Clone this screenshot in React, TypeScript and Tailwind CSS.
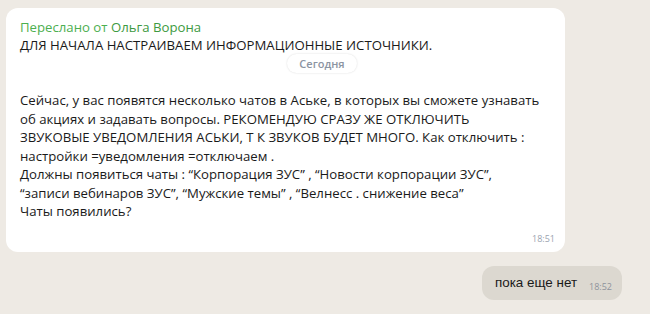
export default function App() {
  return (
    <div className="w-[650px] h-[314px] overflow-hidden bg-[#eeeae4] relative" style={{ fontFamily: '"Open Sans", "Noto Sans", sans-serif' }}>
      {/* floating date */}
      <div className="absolute z-10 left-[287px] top-[54px] h-[19px] w-[70px] rounded-full bg-white shadow-[0_0_2px_rgba(0,0,0,0.15)] text-[11px] font-semibold text-[#8c94a2] leading-[19px] text-center">
        Сегодня
      </div>

      <div className="pl-[6px] pt-[8px] flex flex-col">
        {/* forwarded message */}
        <div className="w-[559px] h-[244px] bg-white rounded-[12px] px-[14px] pt-[10px] relative text-[13.2px] text-[#1a1a1a] leading-[18px]">
          <div className="text-[#4caf50]">
            Переслано от <span className="text-[#3d9a41]">Ольга Ворона</span>
          </div>
          <div>ДЛЯ НАЧАЛА НАСТРАИВАЕМ ИНФОРМАЦИОННЫЕ ИСТОЧНИКИ.</div>
          <div className="mt-[37px] leading-[18.5px]">
            <div>Сейчас, у вас появятся несколько чатов в Аське, в которых вы сможете узнавать</div>
            <div>об акциях и задавать вопросы. РЕКОМЕНДУЮ СРАЗУ ЖЕ ОТКЛЮЧИТЬ</div>
            <div>ЗВУКОВЫЕ УВЕДОМЛЕНИЯ АСЬКИ, Т К ЗВУКОВ БУДЕТ МНОГО. Как отключить :</div>
            <div>настройки =уведомления =отключаем .</div>
            <div>Должны появиться чаты : “Корпорация ЗУС” , “Новости корпорации ЗУС”,</div>
            <div>“записи вебинаров ЗУС”, “Мужские темы” , “Велнесс . снижение веса”</div>
            <div>Чаты появились?</div>
          </div>
          <div className="absolute right-[10px] bottom-[4px] text-[9px] text-[#9aa3b0]">18:51</div>
        </div>

        {/* my reply */}
        <div className="flex justify-end pr-[28px] mt-[14px]">
          <div className="h-[34px] bg-[#dcd8d0] rounded-[12px] pl-[13px] pr-[10px] flex items-center gap-[12px]">
            <span className="text-[13.4px] text-[#1a1a1a]" style={{ fontFamily: '"Liberation Sans", Arial, sans-serif' }}>пока еще нет</span>
            <span className="text-[9px] text-[#8e939b] mt-[7px]">18:52</span>
          </div>
        </div>

        <div className="w-[300px] h-[20px] bg-white rounded-[12px] mt-[14px]"></div>
      </div>
    </div>
  );
}
